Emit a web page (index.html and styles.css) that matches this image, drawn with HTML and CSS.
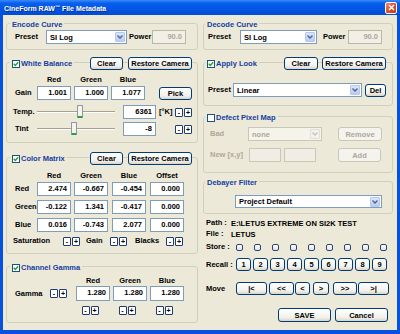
FILE: index.html
```html
<!DOCTYPE html>
<html lang="en">
<head>
    <meta charset="UTF-8">
    <title>CineForm RAW File Metadata</title>
    <link rel="stylesheet" href="styles.css">
</head>
<body>
<div class="window">
    <div class="titlebar">
        <span class="title">CineForm RAW<span class="tm">™</span> File Metadata</span>
        <span class="close"><svg width="7" height="7" viewBox="0 0 7 7"><path d="M1 1L6 6M6 1L1 6" stroke="#fff" stroke-width="1.6"/></svg></span>
    </div>
    <div class="frame">
        <!-- colonne gauche -->
        <div class="col col-left">
            <div class="group g-encode">
                <div class="group-head"><span class="group-title">Encode Curve</span></div>
                <div class="row r-curve">
                    <span class="lbl l-enc-preset">Preset</span>
                    <div class="combo c-enc"><span class="combo-text">SI Log</span><span class="drop"><svg width="6" height="4" viewBox="0 0 6 4"><path d="M0.5 0.5L3 3L5.5 0.5" fill="none" stroke="#4D6185" stroke-width="1.3"/></svg></span></div>
                    <span class="lbl l-enc-power">Power</span>
                    <div class="field ro f-power">90.0</div>
                </div>
            </div>

            <div class="group g-wb">
                <div class="group-head">
                    <span class="group-title"><span class="check"><svg width="6" height="6" viewBox="0 0 6 6"><path d="M0.8 2.8L2.3 4.4L5.2 1.2" fill="none" stroke="#21A121" stroke-width="1.4"/></svg></span>White Balance</span>
                    <span class="btn b-clear">Clear</span>
                    <span class="btn b-restore">Restore Camera</span>
                </div>
                <div class="row hdr wb-hdr">
                    <span class="cell">Red</span><span class="cell">Green</span><span class="cell">Blue</span>
                </div>
                <div class="row wb-gain">
                    <span class="lbl l-row">Gain</span>
                    <div class="field f-cell">1.001</div>
                    <div class="field f-cell">1.000</div>
                    <div class="field f-cell">1.077</div>
                    <span class="btn b-pick">Pick</span>
                </div>
                <div class="row wb-temp">
                    <span class="lbl l-slider">Temp.</span>
                    <div class="slider"><span class="track"></span><span class="thumb" style="left: 40px"></span></div>
                    <div class="field f-kelvin">6361</div>
                    <span class="lbl l-unit">[°K]</span>
                    <span class="spin"><span>-</span><span>+</span></span>
                </div>
                <div class="row wb-tint">
                    <span class="lbl l-row">Tint</span>
                    <div class="slider"><span class="track"></span><span class="thumb" style="left: 34px"></span></div>
                    <div class="field f-kelvin">-8</div>
                    <span class="lbl l-unit"></span>
                    <span class="spin"><span>-</span><span>+</span></span>
                </div>
            </div>

            <div class="group g-matrix">
                <div class="group-head">
                    <span class="group-title"><span class="check"><svg width="6" height="6" viewBox="0 0 6 6"><path d="M0.8 2.8L2.3 4.4L5.2 1.2" fill="none" stroke="#21A121" stroke-width="1.4"/></svg></span>Color Matrix</span>
                    <span class="btn b-clear">Clear</span>
                    <span class="btn b-restore">Restore Camera</span>
                </div>
                <div class="row hdr m-hdr">
                    <span class="cell">Red</span><span class="cell">Green</span><span class="cell">Blue</span><span class="cell">Offset</span>
                </div>
                <div class="row m-row m-first">
                    <span class="lbl l-row">Red</span>
                    <div class="field f-cell">2.474</div><div class="field f-cell">-0.667</div><div class="field f-cell">-0.454</div><div class="field f-cell">0.000</div>
                </div>
                <div class="row m-row">
                    <span class="lbl l-row">Green</span>
                    <div class="field f-cell">-0.122</div><div class="field f-cell">1.341</div><div class="field f-cell">-0.417</div><div class="field f-cell">0.000</div>
                </div>
                <div class="row m-row">
                    <span class="lbl l-row">Blue</span>
                    <div class="field f-cell">0.016</div><div class="field f-cell">-0.743</div><div class="field f-cell">2.077</div><div class="field f-cell">0.000</div>
                </div>
                <div class="row m-sat">
                    <span class="lbl l-sat">Saturation</span>
                    <span class="spin"><span>-</span><span>+</span></span>
                    <span class="lbl l-gain">Gain</span>
                    <span class="spin"><span>-</span><span>+</span></span>
                    <span class="lbl l-blacks">Blacks</span>
                    <span class="spin"><span>-</span><span>+</span></span>
                </div>
            </div>

            <div class="group g-gamma">
                <div class="group-head">
                    <span class="group-title"><span class="check"><svg width="6" height="6" viewBox="0 0 6 6"><path d="M0.8 2.8L2.3 4.4L5.2 1.2" fill="none" stroke="#21A121" stroke-width="1.4"/></svg></span>Channel Gamma</span>
                </div>
                <div class="row hdr g-hdr">
                    <span class="cell">Red</span><span class="cell">Green</span><span class="cell">Blue</span>
                </div>
                <div class="row g-row">
                    <span class="lbl l-gamma">Gamma</span>
                    <span class="spin"><span>-</span><span>+</span></span>
                    <div class="field f-cell f-gamma">1.280</div>
                    <div class="field f-cell">1.280</div>
                    <div class="field f-cell">1.280</div>
                </div>
                <div class="row g-spins">
                    <span class="cell"><span class="spin"><span>-</span><span>+</span></span></span>
                    <span class="cell"><span class="spin"><span>-</span><span>+</span></span></span>
                    <span class="cell"><span class="spin"><span>-</span><span>+</span></span></span>
                </div>
            </div>
        </div>

        <!-- colonne droite -->
        <div class="col col-right">
            <div class="group g-encode">
                <div class="group-head"><span class="group-title">Decode Curve</span></div>
                <div class="row r-curve">
                    <span class="lbl l-dec-preset">Preset</span>
                    <div class="combo c-dec"><span class="combo-text">SI Log</span><span class="drop"><svg width="6" height="4" viewBox="0 0 6 4"><path d="M0.5 0.5L3 3L5.5 0.5" fill="none" stroke="#4D6185" stroke-width="1.3"/></svg></span></div>
                    <span class="lbl l-dec-power">Power</span>
                    <div class="field ro f-power">90.0</div>
                </div>
            </div>

            <div class="group g-look">
                <div class="group-head">
                    <span class="group-title"><span class="check"><svg width="6" height="6" viewBox="0 0 6 6"><path d="M0.8 2.8L2.3 4.4L5.2 1.2" fill="none" stroke="#21A121" stroke-width="1.4"/></svg></span>Apply Look</span>
                    <span class="btn b-clear">Clear</span>
                    <span class="btn b-restore">Restore Camera</span>
                </div>
                <div class="row look-row">
                    <span class="lbl l-look">Preset</span>
                    <div class="combo c-look"><span class="combo-text">Linear</span><span class="drop"><svg width="6" height="4" viewBox="0 0 6 4"><path d="M0.5 0.5L3 3L5.5 0.5" fill="none" stroke="#4D6185" stroke-width="1.3"/></svg></span></div>
                    <span class="btn b-del">Del</span>
                </div>
            </div>

            <div class="group g-defect">
                <div class="group-head">
                    <span class="group-title"><span class="check"></span>Defect Pixel Map</span>
                </div>
                <div class="row d-bad">
                    <span class="lbl off l-bad">Bad</span>
                    <div class="combo off c-bad"><span class="combo-text">none</span><span class="drop"><svg width="6" height="4" viewBox="0 0 6 4"><path d="M0.5 0.5L3 3L5.5 0.5" fill="none" stroke="#C3C3C3" stroke-width="1.3"/></svg></span></div>
                    <span class="btn off b-remove">Remove</span>
                </div>
                <div class="row d-new">
                    <span class="lbl off l-new">New [x,y]</span>
                    <div class="field off f-xy"></div>
                    <div class="field off f-xy f-y"></div>
                    <span class="btn off b-add">Add</span>
                </div>
            </div>

            <div class="group g-debayer">
                <div class="group-head"><span class="group-title">Debayer Filter</span></div>
                <div class="row deb-row">
                    <div class="combo c-deb"><span class="combo-text">Project Default</span><span class="drop"><svg width="6" height="4" viewBox="0 0 6 4"><path d="M0.5 0.5L3 3L5.5 0.5" fill="none" stroke="#4D6185" stroke-width="1.3"/></svg></span></div>
                </div>
            </div>

            <div class="row info i-path"><span class="lbl l-info">Path :</span><span>E:\LETUS EXTREME ON SI2K TEST</span></div>
            <div class="row info i-file"><span class="lbl l-info">File :</span><span>LETUS</span></div>

            <div class="row info i-store">
                <span class="lbl l-nav">Store :</span>
                <div class="slots">
                    <span></span><span></span><span></span><span></span><span></span><span></span><span></span><span></span><span></span>
                </div>
            </div>
            <div class="row info i-recall">
                <span class="lbl l-nav">Recall :</span>
                <div class="recall">
                    <span class="btn">1</span><span class="btn">2</span><span class="btn">3</span><span class="btn">4</span><span class="btn">5</span><span class="btn">6</span><span class="btn">7</span><span class="btn">8</span><span class="btn">9</span>
                </div>
            </div>
            <div class="row info i-move">
                <span class="lbl l-nav">Move</span>
                <span class="btn mv-first">|&lt;</span>
                <span class="btn mv-prev2">&lt;&lt;</span>
                <span class="btn mv-prev">&lt;</span>
                <span class="btn mv-next">&gt;</span>
                <span class="btn mv-next2">&gt;&gt;</span>
                <span class="btn mv-last">&gt;|</span>
            </div>
            <div class="row info i-save">
                <span class="btn b-save">SAVE</span>
                <span class="btn b-cancel">Cancel</span>
            </div>
        </div>
    </div>
</div>
</body>
</html>
```

FILE: styles.css
```css
body {
    margin: 0;
    font-family: "Liberation Sans", Arial, sans-serif;
    font-size: 7.5px;
    font-weight: bold;
    color: #000;
    background-color: #ECE9D8;
}
.window {
    width: 400px;
    height: 334px;
    overflow: hidden;
}

/* barre de titre XP */
.titlebar {
    height: 15px;
    display: flex;
    align-items: center;
    justify-content: space-between;
    padding: 0 3px 0 4px;
    background: linear-gradient(#3A8CF8, #0A60EC 20%, #0257E6 55%, #014BD4);
}
.title {
    color: #fff;
    font-size: 7px;
    text-shadow: 1px 1px 0 #0A2D8C;
}
.tm {
    font-size: 5px;
    vertical-align: 2px;
}
.close {
    width: 12px;
    height: 12px;
    box-sizing: border-box;
    border: 1px solid #fff;
    border-radius: 2px;
    background: linear-gradient(135deg, #F08B6C, #E0502B 50%, #C1381A);
    display: flex;
    align-items: center;
    justify-content: center;
}

.frame {
    height: 319px;
    box-sizing: border-box;
    border: solid #0652DF;
    border-width: 0 3px 4px 3px;
    padding-left: 3px;
    display: flex;
    gap: 5px;
}
.col {
    display: flex;
    flex-direction: column;
}
.col-left { width: 192px; }
.col-right { width: 190px; }

/* group box */
.group {
    box-sizing: border-box;
    border: 1px solid #D0D0BF;
    border-radius: 3px;
    display: flex;
    flex-direction: column;
}
.group-head {
    height: 13px;
    margin-top: -6px;
    display: flex;
    align-items: center;
}
.group-title {
    display: flex;
    align-items: center;
    background-color: #ECE9D8;
    color: #15409F;
    padding: 0 2px;
    margin-left: 3px;
    margin-right: auto;
}
.col-right .group-title { margin-left: 1px; }
.check {
    width: 8px;
    height: 8px;
    box-sizing: border-box;
    border: 1px solid #1C5180;
    background-color: #fff;
    margin-right: 1px;
    display: flex;
    align-items: center;
    justify-content: center;
}

.row {
    display: flex;
    align-items: center;
}
.lbl {
    line-height: 10px;
    white-space: nowrap;
    box-sizing: border-box;
}
.hdr { height: 10px; }
.cell {
    width: 34px;
    display: flex;
    justify-content: center;
}

/* champs */
.field {
    height: 14px;
    box-sizing: border-box;
    border: 1px solid #7F9DB9;
    background-color: #fff;
    text-align: right;
    padding-right: 3px;
    line-height: 12px;
}
.field.ro {
    border-color: #B9B7A8;
    background-color: #F2F0E6;
    color: #ACA899;
}
.field.off {
    border-color: #C9C7BA;
    background-color: #F0EEE4;
}
.combo {
    height: 14px;
    box-sizing: border-box;
    border: 1px solid #7F9DB9;
    background-color: #fff;
    display: flex;
    align-items: center;
}
.combo-text {
    flex: 1;
    padding-left: 3px;
}
.drop {
    width: 10px;
    height: 10px;
    margin-right: 1px;
    box-sizing: border-box;
    border: 1px solid #B4C8F2;
    border-radius: 1px;
    background: linear-gradient(#DCE6FD, #BACBF6);
    display: flex;
    align-items: center;
    justify-content: center;
}
.combo.off {
    border-color: #C9C7BA;
    background-color: #F5F4EA;
    color: #ACA899;
}
.combo.off .drop {
    border-color: #E2E0D6;
    background: #F2F1EA;
}
.off { color: #ACA899; }

/* boutons */
.btn {
    height: 13px;
    box-sizing: border-box;
    border: 1px solid #003C74;
    border-radius: 3px;
    background: linear-gradient(#FFFFFF, #F2F1EC 70%, #D9D4C8);
    display: flex;
    align-items: center;
    justify-content: center;
    white-space: nowrap;
}
.btn.off {
    border-color: #C9C7BA;
    background: #F4F3EE;
    color: #ACA899;
}
.b-clear { width: 33px; }
.b-restore { width: 64px; margin-left: 5px; }
.group-head .btn:last-child { margin-right: 5px; }
.col-right .b-clear { width: 34px; }
.col-right .b-restore { margin-left: 4px; }
.col-right .group-head .btn:last-child { margin-right: 6px; }

.spin {
    display: flex;
    gap: 1px;
}
.spin span {
    width: 8px;
    height: 9px;
    box-sizing: border-box;
    border: 1px solid #1F3B6F;
    border-radius: 1px;
    background-color: #fff;
    font-size: 7px;
    line-height: 7px;
    display: flex;
    align-items: center;
    justify-content: center;
}

/* slider */
.slider {
    position: relative;
    width: 78px;
    height: 14px;
    display: flex;
    align-items: center;
}
.track {
    flex: 1;
    height: 0;
    border-top: 1px solid #A3A192;
    border-bottom: 1px solid #fff;
}
.thumb {
    position: absolute;
    top: 0;
    width: 6px;
    height: 13px;
    box-sizing: border-box;
    border: 1px solid #8C99A3;
    border-bottom: 2px solid #2EA043;
    border-radius: 1px;
    background-color: #F4F3EE;
}

/* Encode / Decode */
.g-encode { height: 27px; margin-top: 8px; }
.r-curve { height: 14px; margin-top: -1px; }
.l-enc-preset { width: 39px; padding-left: 8px; }
.c-enc { width: 81px; }
.l-enc-power { width: 23px; margin-left: 2px; }
.f-power { width: 34px; }
.l-dec-preset { width: 36px; padding-left: 4px; }
.c-dec { width: 77px; }
.l-dec-power { width: 25px; margin-left: 6px; }

/* White Balance */
.g-wb { height: 81px; margin-top: 12px; }
.wb-hdr { margin-top: 4px; padding-left: 30px; gap: 3px; }
.wb-gain { height: 14px; margin-top: 2px; gap: 3px; }
.wb-gain .l-row { margin-right: -3px; }
.l-row { width: 30px; padding-left: 8px; }
.f-cell { width: 34px; }
.b-pick { width: 33px; margin-left: 11px; }
.wb-temp { height: 14px; margin-top: 5px; }
.wb-tint { height: 14px; margin-top: 3px; }
.l-slider { width: 30px; padding-left: 6px; }
.f-kelvin { width: 33px; margin-left: 8px; }
.l-unit { width: 15px; margin-left: 3px; }
.wb-temp .spin, .wb-tint .spin { margin-left: 1px; }

/* Color Matrix */
.g-matrix { height: 97px; margin-top: 14px; }
.m-hdr { margin-top: 5px; padding-left: 30px; }
.m-hdr .cell:nth-child(2) { margin-left: 3px; }
.m-hdr .cell:nth-child(3), .m-hdr .cell:nth-child(4) { margin-left: 4px; }
.m-row { height: 14px; margin-top: 4px; }
.m-first { margin-top: 2px; }
.m-row .field:nth-child(3) { margin-left: 3px; }
.m-row .field:nth-child(4), .m-row .field:nth-child(5) { margin-left: 4px; }
.m-sat { height: 10px; margin-top: 4px; }
.l-sat { width: 56px; padding-left: 6px; }
.l-gain { width: 24px; margin-left: 6px; }
.l-blacks { width: 31px; margin-left: 8px; }

/* Channel Gamma */
.g-gamma { height: 57px; margin-top: 12px; }
.g-hdr { margin-top: 1px; padding-left: 69px; gap: 3px; }
.g-row { height: 15px; margin-top: 1px; gap: 3px; }
.g-row .field { height: 15px; }
.l-gamma { width: 43px; padding-left: 8px; margin-right: -3px; }
.f-gamma { margin-left: 6px; }
.g-spins { height: 9px; margin-top: 5px; padding-left: 66px; gap: 3px; }

/* Apply Look */
.g-look { height: 44px; margin-top: 12px; }
.look-row { height: 14px; margin-top: 13px; }
.l-look { width: 29px; padding-left: 4px; }
.c-look { width: 129px; }
.b-del { width: 21px; margin-left: 3px; }

/* Defect Pixel Map */
.g-defect { height: 57px; margin-top: 10px; }
.d-bad { height: 14px; margin-top: 3px; }
.l-bad { width: 44px; padding-left: 6px; }
.c-bad { width: 74px; }
.b-remove { width: 44px; height: 14px; margin-left: 16px; }
.d-new { height: 14px; margin-top: 7px; }
.l-new { width: 45px; padding-left: 6px; }
.f-xy { width: 32px; }
.f-y { margin-left: 3px; }
.b-add { width: 43px; height: 14px; margin-left: 22px; }

/* Debayer */
.g-debayer { height: 33px; margin-top: 8px; }
.deb-row { margin-top: 6px; }
.c-deb { width: 147px; height: 13px; margin-left: 31px; }

/* infos et navigation */
.info { padding-left: 3px; }
.l-info { width: 25px; }
.i-path { height: 10px; margin-top: 4px; }
.i-file { height: 10px; margin-top: 1px; }
.l-nav { width: 30px; }
.i-store { height: 10px; margin-top: 3px; }
.slots {
    display: flex;
    gap: 11px;
}
.slots span {
    width: 7px;
    height: 7px;
    box-sizing: border-box;
    border: 1px solid #25467E;
    border-radius: 2px;
    background: linear-gradient(#fff, #E4E2DA);
}
.i-recall { height: 13px; margin-top: 6px; }
.recall {
    display: flex;
    gap: 2px;
}
.recall .btn { width: 15px; }
.i-move { height: 13px; margin-top: 11px; }
.mv-first { width: 31px; }
.mv-prev2 { width: 25px; margin-left: 2px; }
.mv-prev { width: 15px; margin-left: 1px; }
.mv-next { width: 16px; margin-left: 3px; }
.mv-next2 { width: 24px; margin-left: 4px; }
.mv-last { width: 31px; margin-left: 1px; }
.i-save { height: 14px; margin-top: 13px; padding-left: 75px; }
.b-save { width: 53px; height: 14px; }
.b-cancel { width: 53px; height: 14px; margin-left: 4px; }
```
